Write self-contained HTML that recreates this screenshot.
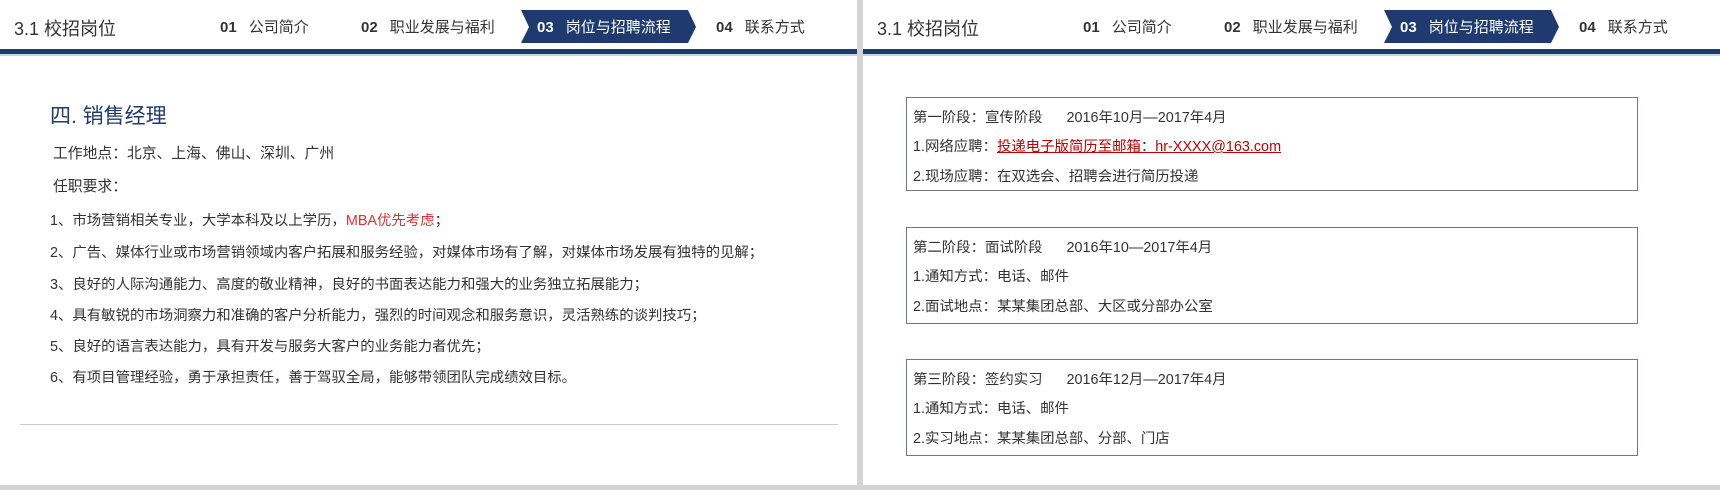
<!DOCTYPE html>
<html><head><meta charset="utf-8"><style>
*{margin:0;padding:0;box-sizing:border-box}
body{width:1720px;height:490px;background:#d4d4d4;position:relative;overflow:hidden;font-family:"Liberation Sans","Noto Sans CJK SC",sans-serif;color:#333}
.slide{position:absolute;top:0;width:857px;height:485px;background:#fff}
.t{position:absolute;white-space:nowrap}
.title{left:14px;top:15px;font-size:18px;color:#333}
.nav{top:16px;font-size:15px;color:#333}
.nav b{font-family:"Liberation Sans",sans-serif;font-weight:900;margin-right:12px;font-size:15px}
.bar{position:absolute;left:0;width:857px;top:49px;height:5px;background:#1f3a6e}
.bar2{position:absolute;left:0;width:857px;top:54px;height:2px;background:#c9d2e0}
.tab{position:absolute;left:520px;top:10px}
.l{font-size:14.4px;color:#333;left:50px}
.box{position:absolute;left:43px;width:732px;border:1px solid #6c7687;}
.box div{position:absolute;left:6px;font-size:14.4px;white-space:nowrap}
</style></head><body>
<div class="slide" style="left:0">
 <div class="t title">3.1 校招岗位</div>
 <svg class="tab" width="180" height="34"><polygon points="1,0 168,0 176,17 168,33 1,33 9,17" fill="#1f3a6e"/></svg>
 <div class="t nav" style="left:220px"><b>01</b>公司简介</div>
 <div class="t nav" style="left:361px"><b>02</b>职业发展与福利</div>
 <div class="t nav" style="left:537px;color:#fff"><b>03</b>岗位与招聘流程</div>
 <div class="t nav" style="left:716px"><b>04</b>联系方式</div>
 <div class="bar"></div><div class="bar2"></div>
 <div class="t" style="left:50px;top:100px;font-size:21px;color:#1f3a6e">四. 销售经理</div>
 <div class="t l" style="left:53px;top:142px;font-size:14.8px">工作地点：北京、上海、佛山、深圳、广州</div>
 <div class="t l" style="left:53px;top:175px;font-size:14.8px">任职要求：</div>
 <div class="t l" style="top:209px">1、市场营销相关专业，大学本科及以上学历，<span style="color:#e03030">MBA优先考虑</span>；</div>
 <div class="t l" style="top:241px">2、广告、媒体行业或市场营销领域内客户拓展和服务经验，对媒体市场有了解，对媒体市场发展有独特的见解；</div>
 <div class="t l" style="top:273px">3、良好的人际沟通能力、高度的敬业精神，良好的书面表达能力和强大的业务独立拓展能力；</div>
 <div class="t l" style="top:304px">4、具有敏锐的市场洞察力和准确的客户分析能力，强烈的时间观念和服务意识，灵活熟练的谈判技巧；</div>
 <div class="t l" style="top:335px">5、良好的语言表达能力，具有开发与服务大客户的业务能力者优先；</div>
 <div class="t l" style="top:366px">6、有项目管理经验，勇于承担责任，善于驾驭全局，能够带领团队完成绩效目标。</div>
 <div style="position:absolute;left:20px;width:818px;top:424px;height:1px;background:#ccc"></div>
</div>
<div class="slide" style="left:863px">
 <div class="t title">3.1 校招岗位</div>
 <svg class="tab" width="180" height="34"><polygon points="1,0 168,0 176,17 168,33 1,33 9,17" fill="#1f3a6e"/></svg>
 <div class="t nav" style="left:220px"><b>01</b>公司简介</div>
 <div class="t nav" style="left:361px"><b>02</b>职业发展与福利</div>
 <div class="t nav" style="left:537px;color:#fff"><b>03</b>岗位与招聘流程</div>
 <div class="t nav" style="left:716px"><b>04</b>联系方式</div>
 <div class="bar"></div><div class="bar2"></div>
 <div class="box" style="top:97px;height:94px">
  <div style="top:8px">第一阶段：宣传阶段&nbsp;&nbsp;&nbsp;&nbsp;&nbsp;&nbsp;2016年10月—2017年4月</div>
  <div style="top:37px">1.网络应聘：<span style="color:#c00000;text-decoration:underline">投递电子版简历至邮箱：hr-XXXX@163.com</span></div>
  <div style="top:67px">2.现场应聘：在双选会、招聘会进行简历投递</div>
 </div>
 <div class="box" style="top:227px;height:97px">
  <div style="top:8px">第二阶段：面试阶段&nbsp;&nbsp;&nbsp;&nbsp;&nbsp;&nbsp;2016年10—2017年4月</div>
  <div style="top:37px">1.通知方式：电话、邮件</div>
  <div style="top:67px">2.面试地点：某某集团总部、大区或分部办公室</div>
 </div>
 <div class="box" style="top:359px;height:97px">
  <div style="top:8px">第三阶段：签约实习&nbsp;&nbsp;&nbsp;&nbsp;&nbsp;&nbsp;2016年12月—2017年4月</div>
  <div style="top:37px">1.通知方式：电话、邮件</div>
  <div style="top:67px">2.实习地点：某某集团总部、分部、门店</div>
 </div>
</div>
</body></html>
